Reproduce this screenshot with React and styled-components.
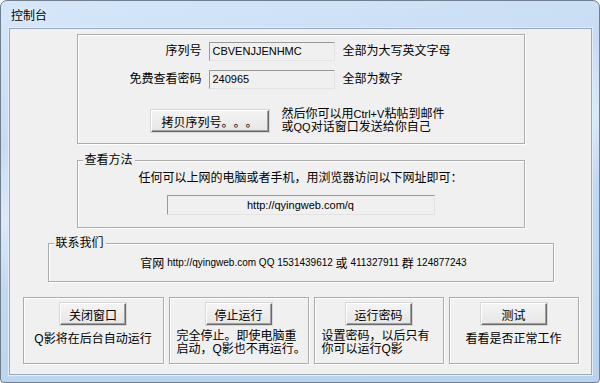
import React from "react"
import styled, { createGlobalStyle } from "styled-components"

const GlobalStyle = createGlobalStyle`
  html, body {
    margin: 0;
    padding: 0;
    background: #ffffff;
  }
  body {
    font-family: "Liberation Sans", "Noto Sans CJK SC", sans-serif;
    font-size: 12px;
    color: #000;
    text-spacing-trim: space-all;
  }
`

const Window = styled.div`
  width: 600px;
  height: 383px;
  box-sizing: border-box;
  display: flex;
  flex-direction: column;
  border: 1px solid #6f7f90;
  border-radius: 7px 7px 4px 4px;
  background: linear-gradient(170deg, #d6e7f9 0%, #c7dcf3 30%, #dbeafa 45%, #c2d8f0 60%, #bad2ec 100%);
  overflow: hidden;
`

const TitleBar = styled.div`
  height: 27px;
  display: flex;
  align-items: center;
  padding-left: 10px;
  font-size: 12px;
  color: #000;
  text-shadow: 0 0 6px rgba(255, 255, 255, 0.9);
`

const Client = styled.div`
  flex: 1;
  margin: 0 7px 7px 8px;
  box-sizing: border-box;
  border: 1px solid #97a9bc;
  box-shadow: 0 0 0 1px #e4eef9;
  background: #f0f0f0;
  padding-top: 5px;
  display: flex;
  flex-direction: column;
  align-items: center;
`

/* latin runs are drawn smaller than the CJK text, like Tahoma next to SimSun */
const Lat = styled.span`
  font-size: ${p => p.$size || 11}px;
`

const Frame = styled.div`
  position: relative;
  box-sizing: border-box;
  width: ${p => p.$w}px;
  height: ${p => p.$h}px;
  margin-top: ${p => p.$mt || 0}px;
  border: 1px solid #acacac;
  box-shadow: inset 1px 1px 0 #ffffff, 1px 1px 0 #ffffff;
`

const Legend = styled.span`
  position: absolute;
  top: -9px;
  left: ${p => p.$left}px;
  padding: 0 2px;
  background: #f0f0f0;
  line-height: 16px;
`

const FormGrid = styled.div`
  display: grid;
  grid-template-columns: 124px 126px auto;
  column-gap: 7px;
  row-gap: 9px;
  padding-top: 7px;
  align-items: center;
`

const Label = styled.div`
  text-align: right;
  line-height: 19px;
`

const Hint = styled.div`
  padding-left: 1px;
  line-height: 19px;
`

const Field = styled.div`
  box-sizing: border-box;
  height: 19px;
  border: 1px solid;
  border-color: #9a9a9a #e3e3e3 #e3e3e3 #9a9a9a;
  background: #f0f0f0;
  padding-left: 3px;
  line-height: 17px;
  font-size: 11px;
  text-align: ${p => (p.$center ? "center" : "left")};
`

const CopyRow = styled.div`
  display: flex;
  align-items: center;
  gap: 13px;
  padding-left: 73px;
  margin-top: 19px;
`

const Button = styled.div`
  box-sizing: border-box;
  width: ${p => p.$w}px;
  height: 22px;
  display: flex;
  align-items: center;
  justify-content: center;
  background: linear-gradient(#f4f4f4, #e6e6e6);
  border: 1px solid;
  border-color: #ffffff #696969 #696969 #ffffff;
  box-shadow: inset -1px -1px 0 #a0a0a0, 0 0 0 1px #d8d8d8;
  font-size: 12px;
`

const Lines = styled.div`
  line-height: 13px;
`

const CenterText = styled.div`
  text-align: center;
  line-height: 16px;
  padding-top: ${p => p.$pt || 0}px;
`

const UrlBox = styled(Field)`
  width: 268px;
  height: 20px;
  margin: 9px auto 0;
  padding-left: 0;
  line-height: 18px;
`

const ContactText = styled.div`
  height: 100%;
  display: flex;
  align-items: center;
  justify-content: center;
  padding-left: 6px;
  white-space: pre;
`

const ActionRow = styled.div`
  display: flex;
  gap: 5px;
  margin-top: 15px;
`

const ActionBox = styled.div`
  box-sizing: border-box;
  width: ${p => p.$w}px;
  height: 67px;
  border: 1px solid #acacac;
  box-shadow: inset 1px 1px 0 #ffffff, 1px 1px 0 #ffffff;
  padding-top: 5px;
  display: flex;
  flex-direction: column;
  align-items: center;
`

const ActionText = styled.div`
  align-self: ${p => (p.$left ? "stretch" : "center")};
  padding-left: ${p => (p.$left ? 7 : 0)}px;
  margin-top: ${p => p.$mt}px;
  line-height: 13px;
  text-align: ${p => (p.$left ? "left" : "center")};
`

const actions = [
  { w: 141, btn: "关闭窗口", lines: ["Q影将在后台自动运行"] },
  { w: 140, btn: "停止运行", lines: ["完全停止。即使电脑重", "启动，Q影也不再运行。"] },
  { w: 130, btn: "运行密码", lines: ["设置密码，以后只有", "你可以运行Q影"] },
  { w: 130, btn: "测试", lines: ["看看是否正常工作"] },
]

const App = () => {
  return (
    <>
      <GlobalStyle />
      <Window>
        <TitleBar>控制台</TitleBar>
        <Client>
          <Frame $w={448} $h={110}>
            <FormGrid>
              <Label>序列号</Label>
              <Field>CBVENJJENHMC</Field>
              <Hint>全部为大写英文字母</Hint>
              <Label>免费查看密码</Label>
              <Field>240965</Field>
              <Hint>全部为数字</Hint>
            </FormGrid>
            <CopyRow>
              <Button $w={118}>拷贝序列号。。。</Button>
              <Lines>
                然后你可以用<Lat>Ctrl+V</Lat>粘帖到邮件
                <br />
                或<Lat>QQ</Lat>对话窗口发送给你自己
              </Lines>
            </CopyRow>
          </Frame>

          <Frame $w={448} $h={68} $mt={16}>
            <Legend $left={5}>查看方法</Legend>
            <CenterText $pt={9}>任何可以上网的电脑或者手机，用浏览器访问以下网址即可：</CenterText>
            <UrlBox $center>http://qyingweb.com/q</UrlBox>
          </Frame>

          <Frame $w={506} $h={39} $mt={15}>
            <Legend $left={5}>联系我们</Legend>
            <ContactText>
              官网<Lat $size={10}> http://qyingweb.com QQ 1531439612 </Lat>或
              <Lat $size={10}> 411327911 </Lat>群<Lat $size={10}> 124877243</Lat>
            </ContactText>
          </Frame>

          <ActionRow>
            {actions.map(a => (
              <ActionBox key={a.btn} $w={a.w}>
                <Button $w={66}>{a.btn}</Button>
                <ActionText $left={a.lines.length > 1} $mt={a.lines.length > 1 ? 5 : 8}>
                  {a.lines.map((l, i) => (
                    <div key={i}>{l}</div>
                  ))}
                </ActionText>
              </ActionBox>
            ))}
          </ActionRow>
        </Client>
      </Window>
    </>
  )
}

export default App
